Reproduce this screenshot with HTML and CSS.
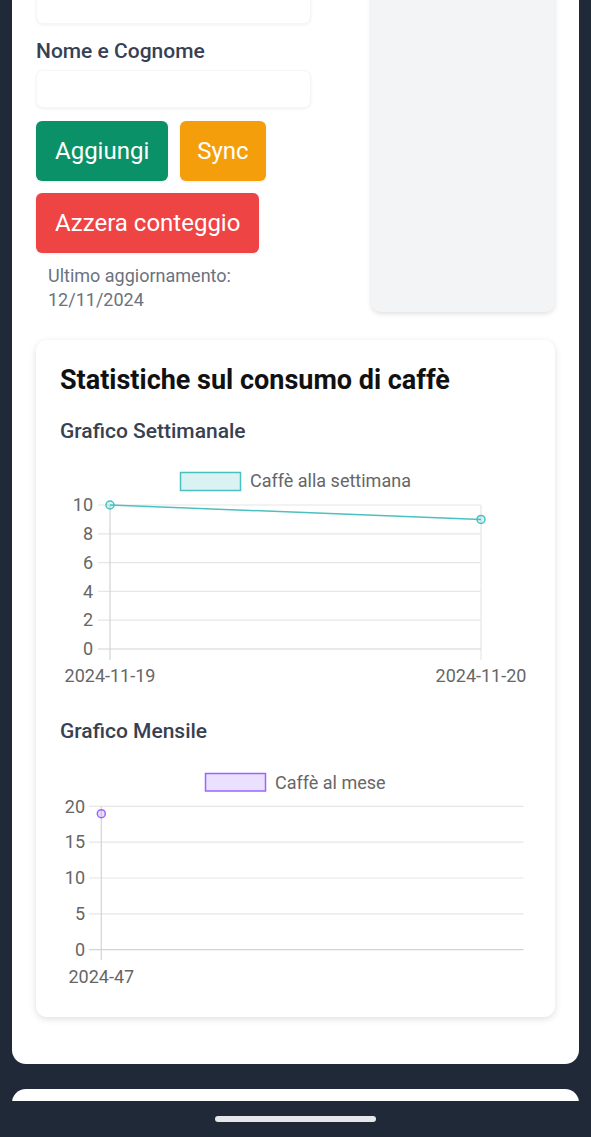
FILE: index.html
```html
<!DOCTYPE html>
<html lang="it">
<head>
<meta charset="utf-8">
<title>Caffè</title>
<link rel="stylesheet" href="styles.css">
</head>
<body>
<main class="screen">
  <section class="panel">
    <div class="form-grid">
      <div class="form-col">
        <input class="input" type="text" aria-label="campo">
        <label class="field-label">Nome e Cognome</label>
        <input class="input" type="text" aria-label="Nome e Cognome">
        <div class="btn-row">
          <button class="btn btn-green">Aggiungi</button>
          <button class="btn btn-amber">Sync</button>
        </div>
        <div class="btn-row">
          <button class="btn btn-red">Azzera conteggio</button>
        </div>
        <p class="updated">Ultimo aggiornamento:<br>12/11/2024</p>
      </div>
      <aside class="side-card"></aside>
    </div>

    <div class="stats-card">
      <h2 class="stats-title">Statistiche sul consumo di caffè</h2>

      <h3 class="chart-title">Grafico Settimanale</h3>
      <svg class="chart" width="471" height="235" viewBox="0 0 471 235">
        <rect x="120.5" y="17.5" width="60" height="18" fill="rgba(75,192,192,0.2)" stroke="rgb(75,192,192)" stroke-width="1.5"/>
        <text class="legend" x="190" y="32">Caffè alla settimana</text>
        <g class="grid">
          <line x1="38" y1="50" x2="421" y2="50"/>
          <line x1="38" y1="78.8" x2="421" y2="78.8"/>
          <line x1="38" y1="107.6" x2="421" y2="107.6"/>
          <line x1="38" y1="136.4" x2="421" y2="136.4"/>
          <line x1="38" y1="165.2" x2="421" y2="165.2"/>
          <line x1="421" y1="50" x2="421" y2="205"/>
        </g>
        <g class="axis">
          <line x1="38" y1="194" x2="421" y2="194"/>
          <line x1="50" y1="50" x2="50" y2="205"/>
        </g>
        <g class="ticks" text-anchor="end">
          <text x="33" y="56.3">10</text>
          <text x="33" y="85">8</text>
          <text x="33" y="113.8">6</text>
          <text x="33" y="142.6">4</text>
          <text x="33" y="171.4">2</text>
          <text x="33" y="200.2">0</text>
        </g>
        <g class="ticks" text-anchor="middle">
          <text x="50" y="227">2024-11-19</text>
          <text x="421" y="227">2024-11-20</text>
        </g>
        <line x1="50" y1="50" x2="421" y2="64.4" stroke="rgb(75,192,192)" stroke-width="1.5"/>
        <circle cx="50" cy="50" r="4" fill="rgba(75,192,192,0.2)" stroke="rgb(75,192,192)" stroke-width="1.5"/>
        <circle cx="421" cy="64.4" r="4" fill="rgba(75,192,192,0.2)" stroke="rgb(75,192,192)" stroke-width="1.5"/>
      </svg>

      <h3 class="chart-title chart-title-next">Grafico Mensile</h3>
      <svg class="chart" width="471" height="238" viewBox="0 0 471 238">
        <rect x="145.5" y="18.5" width="60" height="17.5" fill="rgba(153,102,255,0.2)" stroke="rgb(153,102,255)" stroke-width="1.5"/>
        <text class="legend" x="215" y="33.5">Caffè al mese</text>
        <g class="grid">
          <line x1="29" y1="51.3" x2="463.5" y2="51.3"/>
          <line x1="29" y1="87.1" x2="463.5" y2="87.1"/>
          <line x1="29" y1="123" x2="463.5" y2="123"/>
          <line x1="29" y1="158.8" x2="463.5" y2="158.8"/>
        </g>
        <g class="axis">
          <line x1="29" y1="194.7" x2="463.5" y2="194.7"/>
          <line x1="41.3" y1="51.3" x2="41.3" y2="205"/>
        </g>
        <g class="ticks" text-anchor="end">
          <text x="25" y="57.6">20</text>
          <text x="25" y="93.4">15</text>
          <text x="25" y="129.3">10</text>
          <text x="25" y="165.1">5</text>
          <text x="25" y="201">0</text>
        </g>
        <g class="ticks" text-anchor="middle">
          <text x="41.3" y="228">2024-47</text>
        </g>
        <circle cx="41.3" cy="58.7" r="4" fill="rgba(153,102,255,0.2)" stroke="rgb(153,102,255)" stroke-width="1.5"/>
      </svg>
    </div>
  </section>

  <section class="panel panel-next"></section>
</main>

<div class="nav-bar"><span class="home-indicator"></span></div>
</body>
</html>
```

FILE: styles.css
```css
* {
  box-sizing: border-box;
}

html, body {
  margin: 0;
  height: 1137px;
  overflow: hidden;
}

body {
  background: #1f2937;
  font-family: Roboto, "Liberation Sans", Arial, sans-serif;
  color: #374151;
}

.screen {
  padding: 0 12px;
}

.panel {
  background: #ffffff;
  border-radius: 14px;
  margin-top: -38px;
  padding: 24px 24px 47px;
}

.panel-next {
  margin-top: 25px;
  height: 48px;
  padding: 0;
}

.form-grid {
  display: grid;
  grid-template-columns: 275px 184px;
  column-gap: 60px;
}

.form-col {
  display: flex;
  flex-direction: column;
  align-items: flex-start;
}

.input {
  display: block;
  width: 100%;
  height: 38px;
  border: 1px solid #f5f6f7;
  border-radius: 7px;
  background: #ffffff;
  box-shadow: 0 1px 3px rgba(0, 0, 0, 0.06);
  margin: 0;
}

.field-label {
  display: block;
  margin-top: 13px;
  font-size: 21px;
  line-height: 28px;
  font-weight: 500;
  color: #374151;
}

.field-label + .input {
  margin-top: 5px;
}

.btn-row {
  display: flex;
  gap: 12px;
  margin-top: 13px;
}

.btn-row + .btn-row {
  margin-top: 12px;
}

.btn {
  height: 60px;
  padding: 0 19px;
  border: none;
  border-radius: 6px;
  font-family: Roboto, "Liberation Sans", Arial, sans-serif;
  font-size: 24px;
  line-height: 28px;
  color: #ffffff;
  box-shadow: 0 1px 3px rgba(0, 0, 0, 0.08);
}

.btn-green {
  background: #0b9168;
}

.btn-amber {
  background: #f59e0b;
  padding: 0 17px;
}

.btn-red {
  background: #ef4444;
}

.updated {
  margin: 11px 0 0;
  padding-left: 12px;
  font-size: 18px;
  line-height: 24px;
  color: #6b7280;
}

.side-card {
  background: #f3f4f6;
  border-radius: 10px;
  box-shadow: 0 2px 5px rgba(0, 0, 0, 0.12);
}

.stats-card {
  margin-top: 28px;
  background: #ffffff;
  border-radius: 11px;
  padding: 24px;
  box-shadow: 0 2px 7px rgba(0, 0, 0, 0.13);
}

.stats-title {
  margin: 0;
  font-size: 27px;
  line-height: 32px;
  font-weight: 700;
  color: #111111;
}

.chart-title {
  margin: 21px 0 0;
  font-size: 21px;
  line-height: 28px;
  font-weight: 500;
  color: #374151;
}

.chart-title-next {
  margin-top: 27px;
}

.chart {
  display: block;
  margin-top: 10px;
  overflow: visible;
}

.chart text {
  font-family: Roboto, "Liberation Sans", Arial, sans-serif;
  font-size: 18px;
  fill: #666666;
}

.grid line {
  stroke: #e6e6e6;
  stroke-width: 1.2;
}

.axis line {
  stroke: #d4d4d4;
  stroke-width: 1.2;
}

.nav-bar {
  position: fixed;
  left: 0;
  right: 0;
  bottom: 0;
  height: 36px;
  background: #1f2937;
  display: flex;
  justify-content: center;
  padding-top: 15px;
}

.home-indicator {
  display: block;
  width: 161px;
  height: 6px;
  border-radius: 3px;
  background: #e5e7eb;
}
```
